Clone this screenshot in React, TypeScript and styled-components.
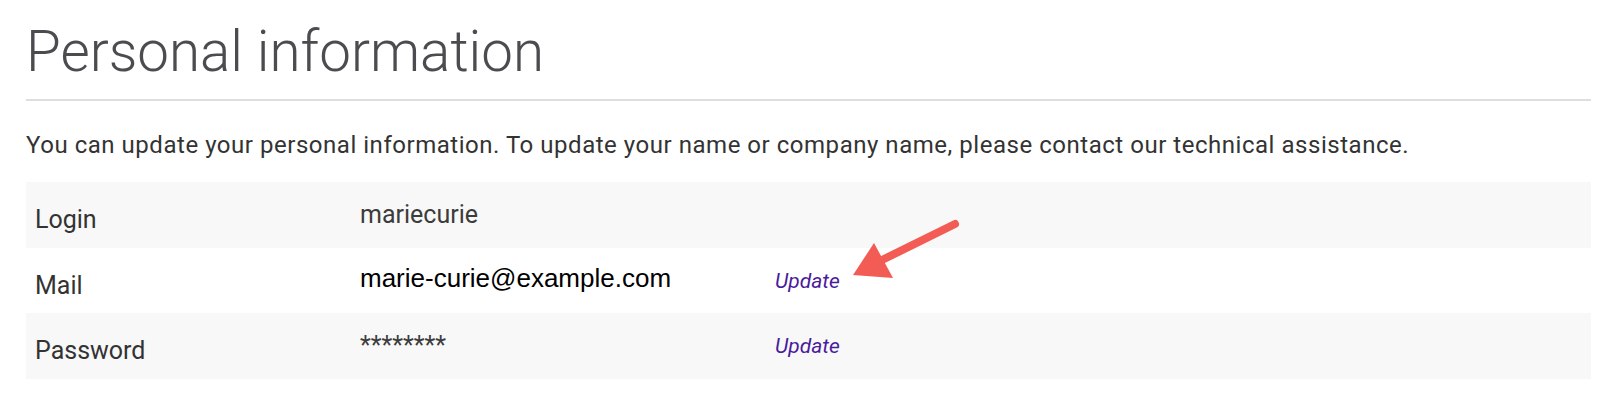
import React from "react";
import styled, { createGlobalStyle } from "styled-components";

const Global = createGlobalStyle`
  html, body { margin: 0; padding: 0; background: #ffffff; }
  body { font-family: Roboto, "Noto Sans", sans-serif; }
`;

const Page = styled.div`
  position: relative;
  padding: 24px 21px 0 26px;
`;

const Title = styled.h1`
  margin: 0;
  font-family: Roboto, sans-serif;
  font-weight: 300;
  font-size: 56.5px;
  line-height: 57px;
  color: #4b4b50;
`;

const Divider = styled.hr`
  margin: 18px 0 0;
  border: 0;
  height: 2px;
  background: #dedede;
`;

const Intro = styled.p`
  margin: 0;
  padding-top: 32px;
  font-family: Roboto, sans-serif;
  font-size: 24px;
  line-height: 24px;
  letter-spacing: 0.53px;
  color: #333333;
`;

const Table = styled.div`
  margin-top: 25px;
  display: flex;
  flex-direction: column;
`;

const Row = styled.div<{ $shaded: boolean }>`
  display: grid;
  grid-template-columns: 325px 415px 1fr;
  height: 65.67px;
  padding-left: 9px;
  background: ${(p) => (p.$shaded ? "#f8f8f8" : "#ffffff")};
`;

const Label = styled.div`
  padding-top: 25px;
  font-family: Roboto, sans-serif;
  font-size: 25px;
  line-height: 25px;
  color: #333333;
`;

const Value = styled.div<{ $mail?: boolean }>`
  padding-top: ${(p) => (p.$mail ? "17px" : "20px")};
  font-family: ${(p) =>
    p.$mail ? '"Liberation Sans", Arial, sans-serif' : "Roboto, sans-serif"};
  font-size: ${(p) => (p.$mail ? "26px" : "25px")};
  line-height: ${(p) => (p.$mail ? "26px" : "25px")};
  color: ${(p) => (p.$mail ? "#000000" : "#3c3c3c")};
`;

const Action = styled.a`
  display: block;
  padding-top: 23px;
  font-family: Roboto, sans-serif;
  font-style: italic;
  font-size: 21px;
  line-height: 21px;
  color: #4a1b9d;
  text-decoration: none;
  cursor: pointer;
`;

const Arrow = styled.svg`
  position: absolute;
  left: 840px;
  top: 210px;
  width: 130px;
  height: 80px;
  overflow: visible;
`;

const rows = [
  { label: "Login", value: "mariecurie", mail: false, action: false },
  { label: "Mail", value: "marie-curie@example.com", mail: true, action: true },
  { label: "Password", value: "********", mail: false, action: true },
];

export default function App() {
  return (
    <>
      <Global />
      <Page>
        <Title>Personal information</Title>
        <Divider />
        <Intro>
          You can update your personal information. To update your name or company name, please
          contact our technical assistance.
        </Intro>
        <Table>
          {rows.map((r, i) => (
            <Row key={r.label} $shaded={i % 2 === 0}>
              <Label>{r.label}</Label>
              <Value $mail={r.mail}>{r.value}</Value>
              <div>{r.action && <Action>Update</Action>}</div>
            </Row>
          ))}
        </Table>
        <Arrow viewBox="840 210 130 80">
          <line
            x1="955"
            y1="224"
            x2="878"
            y2="262"
            stroke="#f25c54"
            strokeWidth="8"
            strokeLinecap="round"
          />
          <polygon points="853,275 874,243 893,278" fill="#f25c54" />
        </Arrow>
      </Page>
    </>
  );
}
